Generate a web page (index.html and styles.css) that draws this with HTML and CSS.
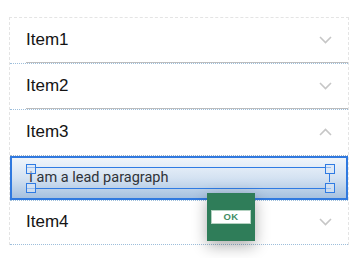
FILE: index.html
```html
<!DOCTYPE html>
<html>
<head>
<meta charset="utf-8">
<link rel="stylesheet" href="styles.css">
</head>
<body>
<div class="accordion">
  <div class="item">
    <div class="head"><span class="title">Item1</span>
      <svg class="chev" width="13" height="8" viewBox="0 0 13 8"><polyline points="1,1 6.5,6.5 12,1"/></svg>
    </div>
  </div>
  <div class="item">
    <div class="head"><span class="title">Item2</span>
      <svg class="chev" width="13" height="8" viewBox="0 0 13 8"><polyline points="1,1 6.5,6.5 12,1"/></svg>
    </div>
  </div>
  <div class="item open">
    <div class="head"><span class="title">Item3</span>
      <svg class="chev" width="13" height="8" viewBox="0 0 13 8"><polyline points="1,7 6.5,1.5 12,7"/></svg>
    </div>
    <div class="panel">
      <div class="lead">
        <div class="sel">
          <p class="text">I am a lead paragraph</p>
          <span class="h tl"></span><span class="h bl"></span>
          <span class="h tr"></span><span class="h br"></span>
        </div>
      </div>
    </div>
  </div>
  <div class="item last">
    <div class="head"><span class="title">Item4</span>
      <svg class="chev" width="13" height="8" viewBox="0 0 13 8"><polyline points="1,1 6.5,6.5 12,1"/></svg>
    </div>
  </div>
</div>
<div class="popup"><div class="ok">OK</div></div>
</body>
</html>
```
FILE: styles.css
```css
html, body { margin: 0; padding: 0; background: #fff; }
body { width: 360px; height: 258px; overflow: hidden; position: relative; font-family: "Liberation Sans", Arial, sans-serif; }

.accordion {
  margin: 17px 0 0 9px;
  width: 340px;
  box-sizing: border-box;
  border: 1px dashed #e4e4e4;
  border-bottom: none;
}
.item { border-bottom: 1px dotted #9dbedb; }
.head {
  margin-left: 16px;
  height: 44px;
  padding-right: 16px;
  display: flex;
  align-items: center;
  justify-content: space-between;
  border-bottom: 1px solid #bdbdbd;
}
.open { border-bottom: none; }
.open .head { border-bottom: 1px solid transparent; }
.last .head { border-bottom: 1px solid transparent; height: 42px; }
.title { font-size: 17px; color: #141414; }
.chev { display: block; }
.chev polyline { fill: none; stroke: #c6c6c6; stroke-width: 1.6; }

.panel { border-top: 1px dotted #a9b6c4; border-bottom: 1px dotted #9dbedb; }
.lead {
  border: 2px solid #3079df;
  background: linear-gradient(#f0f5fb 0%, #d4e2f2 50%, #a6c1df 100%);
  padding: 9px 15px 0 14px;
  height: 31px;
}
.sel {
  position: relative;
  height: 20px;
  border-top: 1.5px solid #2f7be3;
  border-bottom: 1.5px solid #2f7be3;
}
.text {
  margin: 0;
  padding-left: 3px;
  font-family: Roboto, "Liberation Sans", sans-serif;
  font-size: 14.5px;
  line-height: 20px;
  color: #2f3338;
}
.sel::after {
  content: "";
  position: absolute;
  right: 1px;
  top: 6px;
  bottom: 6px;
  border-right: 1.5px solid #2f7be3;
}
.h {
  position: absolute;
  width: 8px;
  height: 8px;
  border: 1.5px solid #2f7be3;
  background: rgba(220, 232, 246, 0.6);
}
.tl { left: 0; top: -4px; }
.bl { left: 0; bottom: -5px; }
.tr { right: -4px; top: -4px; }
.br { right: -4px; bottom: -5px; }

.popup {
  position: absolute;
  left: 207px;
  top: 193px;
  width: 48px;
  height: 48px;
  background: #2f7d59;
  box-shadow: 0 5px 14px rgba(0, 0, 0, 0.32);
}
.ok {
  position: absolute;
  left: 4px;
  top: 17px;
  width: 38px;
  height: 12px;
  background: #fff;
  border: 1px solid #b4d2c1;
  font-family: "Liberation Sans", Arial, sans-serif;
  font-weight: bold;
  font-size: 9.5px;
  line-height: 12px;
  text-align: center;
  color: #3f8d65;
  letter-spacing: 0.3px;
}
```
